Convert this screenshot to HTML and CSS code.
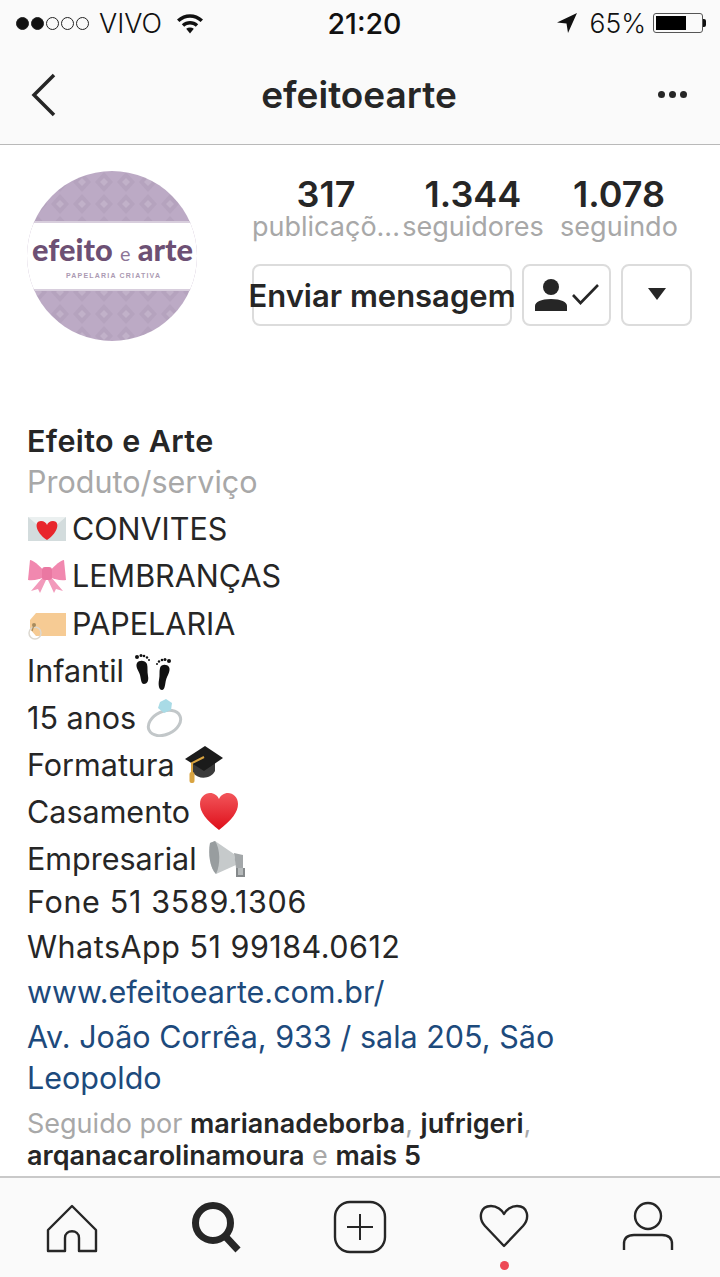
FILE: index.html
```html
<!DOCTYPE html>
<html lang="en">
<head>
    <meta charset="UTF-8">
    <meta name="viewport" content="width=device-width, initial-scale=1.0">
    <title>efeitoearte</title>
    <link rel="stylesheet" href="styles.css">
</head>
<body>
<div class="page">

    <!-- Status bar -->
    <div class="status-bar">
        <div class="status-left">
            <span class="signal">
                <i class="dot on"></i><i class="dot on"></i><i class="dot"></i><i class="dot"></i><i class="dot"></i>
            </span>
            <span class="carrier">VIVO</span>
            <svg class="wifi" viewBox="0 0 28 22">
                <path d="M1 7.500C8.500 .5 19.500 .5 27 7.500L24.600 10C18.300 4.300 9.700 4.300 3.400 10Z" fill="#111"/>
                <path d="M5.800 12.300C10.600 8 17.400 8 22.200 12.300L19.800 14.800C16.300 11.800 11.700 11.800 8.200 14.800Z" fill="#111"/>
                <path d="M10.200 16.800C12.500 15 15.500 15 17.800 16.800L14 21.500Z" fill="#111"/>
            </svg>
        </div>
        <div class="clock">21:20</div>
        <div class="status-right">
            <svg class="location" viewBox="0 0 20 20"><path d="M20 0L0 9.500L9.500 10.500L11 20Z" fill="#111"/></svg>
            <span class="percent">65%</span>
            <span class="battery"><span class="battery-level"></span></span>
            <span class="battery-tip"></span>
        </div>
    </div>

    <!-- Nav bar -->
    <div class="nav-bar">
        <svg class="back" viewBox="0 0 25 44"><path d="M23 2L3 22L23 42" fill="none" stroke="#262626" stroke-width="3.500"/></svg>
        <h1 class="nav-title">efeitoearte</h1>
        <span class="more"><i></i><i></i><i></i></span>
    </div>

    <!-- Profile header -->
    <div class="profile-head">
        <svg class="avatar" viewBox="0 0 170 170">
            <defs>
                <pattern id="damask" width="22" height="22" patternUnits="userSpaceOnUse">
                    <rect width="22" height="22" fill="#bcaac5"/>
                    <path d="M11 1L20 11L11 21L2 11Z" fill="#b5a3be"/>
                    <path d="M11 7L15 11L11 15L7 11Z" fill="#c1b1c9"/>
                </pattern>
                <clipPath id="disc"><circle cx="85" cy="85" r="85"/></clipPath>
            </defs>
            <g clip-path="url(#disc)">
                <rect width="170" height="170" fill="url(#damask)"/>
                <rect y="52" width="170" height="66" fill="#fff"/>
                <rect y="50" width="170" height="2" fill="#d8cedd"/>
                <rect y="118" width="170" height="2" fill="#d8cedd"/>
                <text class="logo-main" x="5" y="90" textLength="161" lengthAdjust="spacingAndGlyphs">efeito <tspan class="logo-small">e</tspan> arte</text>
                <text class="logo-sub" x="39" y="107" textLength="94">PAPELARIA CRIATIVA</text>
            </g>
        </svg>
        <div class="head-right">
            <div class="stats">
                <div class="stat"><div class="stat-num">317</div><div class="stat-label">publicaçõ...</div></div>
                <div class="stat"><div class="stat-num">1.344</div><div class="stat-label">seguidores</div></div>
                <div class="stat"><div class="stat-num">1.078</div><div class="stat-label">seguindo</div></div>
            </div>
            <div class="actions">
                <button class="btn btn-message">Enviar mensagem</button>
                <button class="btn btn-following">
                    <svg class="following-icon" viewBox="0 0 64 32">
                        <circle cx="16" cy="8" r="8" fill="#262626"/>
                        <path d="M0 32V27C0 23 6 20 16 20S32 23 32 27V32Z" fill="#262626"/>
                        <path d="M38 16L45.500 24L63 6" fill="none" stroke="#262626" stroke-width="2.600"/>
                    </svg>
                </button>
                <button class="btn btn-more"><span class="caret"></span></button>
            </div>
        </div>
    </div>

    <!-- Bio -->
    <div class="bio">
        <div class="line name">Efeito e Arte</div>
        <div class="line category">Produto/serviço</div>
        <div class="line tall">
            <svg class="emoji lead" viewBox="0 0 38 38">
                <rect y="7" width="38" height="24" fill="#d3dcdd"/>
                <path d="M0 7L19 23L38 7Z" fill="#ebf0f0"/>
                <path d="M19 30C7 22 6 11 13 11C16 11 18.500 13 19 15C19.500 13 22 11 25 11C32 11 31 22 19 30Z" fill="#e8262c"/>
            </svg>CONVITES
        </div>
        <div class="line tall">
            <svg class="emoji lead" viewBox="0 0 38 38">
                <path d="M16 14C11 8 5 3 2 3L0 23C6 24 12 22 16 20Z" fill="#f188af"/>
                <path d="M22 14C27 8 33 3 36 3L38 23C32 24 26 22 22 20Z" fill="#f188af"/>
                <path d="M15 20L3 34L10 32L12 36L18 23Z" fill="#f29abb"/>
                <path d="M23 20L35 34L28 32L26 36L20 23Z" fill="#f29abb"/>
                <rect x="14" y="10" width="10" height="13" rx="3" fill="#ea78a2"/>
            </svg>LEMBRANÇAS
        </div>
        <div class="line tall tag-line">
            <svg class="emoji lead" viewBox="0 0 38 38">
                <path d="M8 8H38V31H8L2 24V15Z" fill="#f6cb94"/>
                <circle cx="7" cy="28" r="6" fill="none" stroke="#dcd8d0" stroke-width="1.500"/>
                <circle cx="6" cy="20" r="2" fill="#a88c5e"/>
                <path d="M6 20L4 26" stroke="#a88c5e" stroke-width="1.200"/>
            </svg>PAPELARIA
        </div>
        <div class="line tall">Infantil
            <svg class="emoji" viewBox="0 0 38 38">
                <path d="M3 11C5 8 11 8 13 12C14 16 13 19 14 24C15 29 13 32 10 32C7 32 7 27 6 23C5 19 1 15 3 11Z" fill="#111"/>
                <circle cx="3" cy="5" r="2" fill="#111"/><circle cx="7" cy="3.500" r="1.500" fill="#111"/><circle cx="10" cy="4" r="1.300" fill="#111"/><circle cx="13" cy="5.500" r="1.200" fill="#111"/><circle cx="15" cy="8" r="1" fill="#111"/>
                <path d="M35 15C33 12 27 12 26 16C25 20 26 23 25 28C24 33 25 38 28 38C31 38 31 32 32 28C33 24 37 19 35 15Z" fill="#111"/>
                <circle cx="35" cy="9" r="2" fill="#111"/><circle cx="31" cy="7.500" r="1.500" fill="#111"/><circle cx="28" cy="8" r="1.300" fill="#111"/><circle cx="25" cy="9.500" r="1.200" fill="#111"/><circle cx="23" cy="12" r="1" fill="#111"/>
            </svg>
        </div>
        <div class="line tall">15 anos
            <svg class="emoji" viewBox="0 0 38 38">
                <ellipse cx="18.500" cy="24" rx="17" ry="11.500" transform="rotate(-25 18.500 24)" fill="none" stroke="#c2c7c9" stroke-width="3"/>
                <path d="M14 3L20 0L26 4L25 11L18 14L12 9Z" fill="#a9dbe6"/>
            </svg>
        </div>
        <div class="line tall">Formatura
            <svg class="emoji" viewBox="0 0 38 38">
                <path d="M8 16V27C14 34 26 33 30 25V16Z" fill="#3a3a3a"/>
                <path d="M0 13L20 0L38 12L19 25Z" fill="#1b1b1b"/>
                <path d="M19 11L7 17V28" fill="none" stroke="#d9a441" stroke-width="2"/>
                <rect x="4.500" y="26" width="5" height="11" rx="2" fill="#d9a441"/>
            </svg>
        </div>
        <div class="line tall">Casamento
            <svg class="emoji" viewBox="0 0 38 38">
                <defs>
                    <linearGradient id="heart-red" x1="0" y1="0" x2="0" y2="1">
                        <stop offset="0" stop-color="#f2555a"/>
                        <stop offset="1" stop-color="#de0f1a"/>
                    </linearGradient>
                </defs>
                <path d="M19 37C6 27 0 19 0 11C0 4 5 0 10 0C14 0 17.500 2.500 19 6C20.500 2.500 24 0 28 0C33 0 38 4 38 11C38 19 32 27 19 37Z" fill="url(#heart-red)"/>
            </svg>
        </div>
        <div class="line tall">Empresarial
            <svg class="emoji" viewBox="0 0 38 38">
                <path d="M3 3L8 1L27 14L29 25L9 34C3 28 1 14 3 3Z" fill="#c6cacb"/>
                <path d="M3 3L8 1C13 8 14 24 9 34C3 28 1 14 3 3Z" fill="#989d9f"/>
                <path d="M27 13L36 15V29L29 28Z" fill="#a3a7a9"/>
                <path d="M30 28V36H37V28" fill="#b5b9ba" stroke="#85898b" stroke-width="2"/>
            </svg>
        </div>
        <div class="line phone">Fone 51 3589.1306</div>
        <div class="line spaced whatsapp">WhatsApp 51 99184.0612</div>
        <div class="line spaced link">www.efeitoearte.com.br/</div>
        <div class="line spaced link">Av. João Corrêa, 933 / sala 205, São</div>
        <div class="line link wrapped">Leopoldo</div>
    </div>

    <!-- Followed by -->
    <div class="followed">
        <div>Seguido por <b>marianadeborba</b>, <b>jufrigeri</b>,</div>
        <div><b>arqanacarolinamoura</b> e <b>mais 5</b></div>
    </div>

    <!-- Tab bar -->
    <div class="tab-bar">
        <div class="tab">
            <svg class="tab-icon" viewBox="0 0 56 56">
                <path d="M4 51V30L28 6L52 30V51H35V38C35 29 21 29 21 38V51Z" fill="none" stroke="#262626" stroke-width="2.400" stroke-linejoin="round"/>
            </svg>
        </div>
        <div class="tab">
            <svg class="tab-icon" viewBox="0 0 56 56">
                <circle cx="25" cy="23" r="17.500" fill="none" stroke="#262626" stroke-width="7"/>
                <path d="M37 36L50 50" stroke="#262626" stroke-width="7"/>
            </svg>
        </div>
        <div class="tab">
            <svg class="tab-icon" viewBox="0 0 56 56">
                <rect x="3" y="2" width="50" height="50" rx="15" fill="none" stroke="#262626" stroke-width="2.400"/>
                <path d="M28 14V40M15 27H41" stroke="#262626" stroke-width="2"/>
            </svg>
        </div>
        <div class="tab">
            <svg class="tab-icon" viewBox="0 0 56 56">
                <path d="M28 46L9 26C2 18 4 6 15 6C21 6 26 10 28 14C30 10 35 6 41 6C52 6 54 18 47 26Z" fill="none" stroke="#262626" stroke-width="2.400" stroke-linejoin="round"/>
            </svg>
            <span class="badge"></span>
        </div>
        <div class="tab">
            <svg class="tab-icon" viewBox="0 0 56 56">
                <circle cx="28" cy="16" r="13" fill="none" stroke="#262626" stroke-width="2.400"/>
                <path d="M4 50V44C4 38 8 35 14 35H42C48 35 52 38 52 44V50" fill="none" stroke="#262626" stroke-width="2.400"/>
            </svg>
        </div>
    </div>

</div>
</body>
</html>
```

FILE: styles.css
```css
/* styles.css */
html, body {
    margin: 0;
    padding: 0;
}

body {
    font-family: Inter, "Liberation Sans", sans-serif;
    color: #262626;
    background-color: #fff;
}

.page {
    width: 720px;
    height: 1277px;
    display: flex;
    flex-direction: column;
    overflow: hidden;
}

/* Status bar */
.status-bar {
    height: 46px;
    background-color: #fafafa;
    display: grid;
    grid-template-columns: 1fr auto 1fr;
    align-items: center;
    padding: 0 13px 0 16px;
    color: #111;
    font-size: 26px;
}

.status-left,
.status-right {
    display: flex;
    align-items: center;
}

.status-right {
    justify-content: flex-end;
}

.signal {
    display: flex;
    gap: 2px;
}

.dot {
    width: 13px;
    height: 13px;
    border: 1.500px solid #222;
    border-radius: 50%;
    box-sizing: border-box;
}

.dot.on {
    background-color: #111;
}

.carrier {
    margin-left: 10px;
    font-size: 27px;
    font-weight: 300;
}

.wifi {
    width: 28px;
    height: 22px;
    margin-left: 14px;
}

.clock {
    font-size: 28.500px;
    font-weight: 500;
    margin-left: 6px;
}

.location {
    width: 20px;
    height: 20px;
}

.percent {
    margin-left: 13px;
    font-size: 26.500px;
    font-weight: 300;
}

.battery {
    width: 50px;
    height: 20px;
    margin-left: 7px;
    border: 1.500px solid #555;
    border-radius: 3px;
    box-sizing: border-box;
    padding: 2px;
    display: flex;
}

.battery-level {
    width: 30px;
    background-color: #000;
}

.battery-tip {
    width: 3px;
    height: 8px;
    background-color: #111;
    border-radius: 0 2px 2px 0;
    margin-right: 1px;
}

/* Nav bar */
.nav-bar {
    height: 97px;
    padding: 0 33px 1px 31px;
    background-color: #fafafa;
    border-bottom: 1px solid #b9b9b9;
    display: grid;
    grid-template-columns: 1fr auto 1fr;
    align-items: center;
}

.back {
    width: 25px;
    height: 44px;
}

.nav-title {
    margin: 0;
    font-size: 37px;
    font-weight: 600;
}

.more {
    display: flex;
    justify-content: flex-end;
    gap: 4px;
}

.more i {
    width: 7px;
    height: 7px;
    border-radius: 50%;
    background-color: #262626;
}

/* Profile header */
.profile-head {
    display: flex;
    padding: 26px 28px 0 27px;
    height: 172px;
}

.avatar {
    width: 170px;
    height: 170px;
    flex-shrink: 0;
}

.logo-main {
    font-family: Lato, sans-serif;
    font-weight: 900;
    font-size: 31px;
    fill: #6d5074;
}

.logo-small {
    font-size: 20px;
    font-weight: 400;
    fill: #8d7596;
}

.logo-sub {
    font-family: "Liberation Sans", sans-serif;
    font-size: 7px;
    font-weight: bold;
    fill: #ab9ab2;
}

.head-right {
    margin-left: 55px;
    flex: 1;
}

.stats {
    display: grid;
    grid-template-columns: repeat(3, 1fr);
    text-align: center;
}

.stat-num {
    padding-top: 5px;
    font-size: 36px;
    font-weight: 600;
    line-height: 36px;
}

.stat-label {
    font-size: 27px;
    line-height: 30px;
    color: #a8a8a8;
    white-space: nowrap;
}

.actions {
    display: flex;
    gap: 10px;
    margin-top: 22px;
}

.btn {
    height: 62px;
    background-color: #fff;
    border: 2px solid #dcdcdc;
    border-radius: 8px;
    padding: 0;
    display: flex;
    align-items: center;
    justify-content: center;
    color: #262626;
    font-family: inherit;
}

.btn-message {
    width: 260px;
    font-size: 31px;
    font-weight: 600;
    white-space: nowrap;
}

.btn-following {
    width: 89px;
}

.following-icon {
    width: 64px;
    height: 32px;
}

.btn-more {
    width: 71px;
}

.caret {
    width: 0;
    height: 0;
    margin-bottom: 2px;
    border-left: 9px solid transparent;
    border-right: 9px solid transparent;
    border-top: 12px solid #262626;
}

/* Bio */
.bio {
    padding: 0 27px;
    margin-top: 77px;
    font-size: 30.500px;
}

.line {
    height: 41px;
    line-height: 41px;
    white-space: nowrap;
    display: flex;
    align-items: center;
    gap: 10px;
}

.line.tall {
    height: 47px;
    line-height: 47px;
}

.line.spaced {
    height: 45px;
    line-height: 45px;
}

.line.wrapped {
    margin-top: -2px;
}

.tag-line {
    margin-top: 1px;
}

.phone {
    margin-top: -1px;
    margin-bottom: 2px;
    letter-spacing: 0.650px;
}

.whatsapp {
    letter-spacing: 0.500px;
}

.name {
    font-weight: 600;
    letter-spacing: 0.400px;
}

.category {
    color: #a8a8a8;
    margin-bottom: 3px;
}

.link {
    color: #1d4a7c;
}

.emoji {
    width: 38px;
    height: 38px;
    flex-shrink: 0;
}

.emoji.lead {
    margin-left: 1px;
    margin-right: -4px;
}

/* Followed by */
.followed {
    padding: 0 27px;
    margin-top: 10px;
    font-size: 27px;
    line-height: 32px;
    color: #a8a8a8;
    white-space: nowrap;
}

.followed b {
    font-weight: 600;
    color: #262626;
}

/* Tab bar */
.tab-bar {
    margin-top: auto;
    height: 99px;
    background-color: #fafafa;
    border-top: 2px solid #c9c9c9;
    display: grid;
    grid-template-columns: repeat(5, 144px);
}

.tab {
    position: relative;
    display: flex;
    justify-content: center;
    padding-top: 22px;
}

.tab-icon {
    width: 56px;
    height: 56px;
}

.badge {
    position: absolute;
    left: 68px;
    top: 83px;
    width: 9px;
    height: 9px;
    border-radius: 50%;
    background-color: #ed4956;
}
```
